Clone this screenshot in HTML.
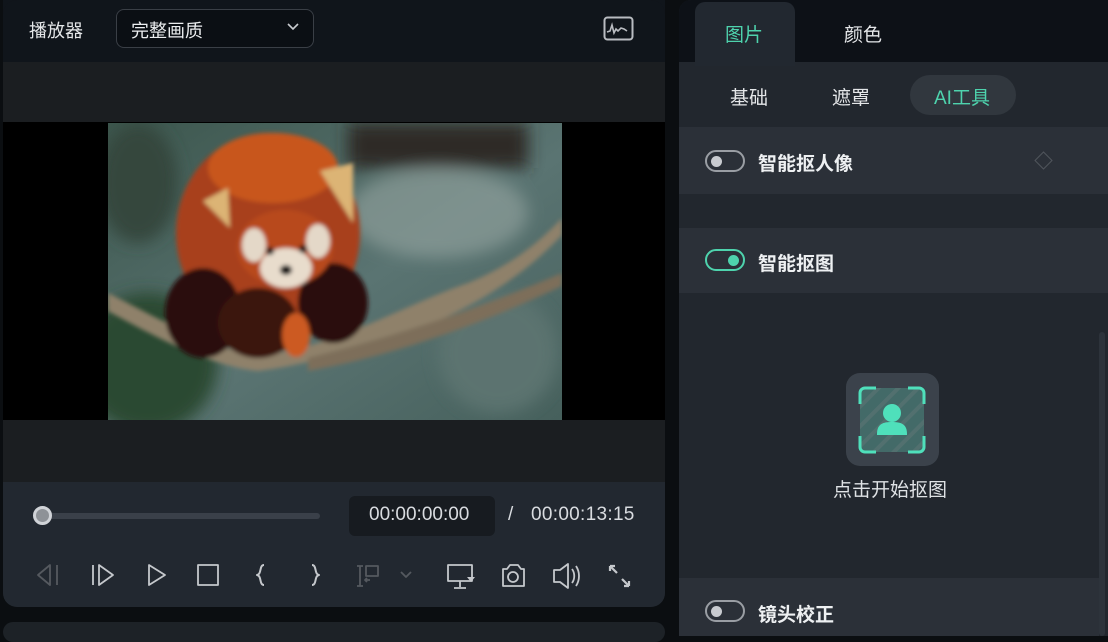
<!DOCTYPE html>
<html><head><meta charset="utf-8"><style>
*{margin:0;padding:0;box-sizing:border-box}
body{width:1108px;height:636px;background:#0b0e11;position:relative;overflow:hidden;font-family:"Liberation Sans","Noto Sans CJK SC",sans-serif;color:#e6e8ea}
.a{position:absolute}
.t{font-size:18px;white-space:nowrap}
.b{font-weight:bold;font-size:19px;white-space:nowrap;color:#eef0f2}
.tog{position:absolute;width:40px;height:22px;border:2px solid #9a9ea4;border-radius:11px}
.tog i{position:absolute;left:4px;top:4px;width:11px;height:11px;border-radius:50%;background:#c8cbd0}
</style></head><body>
<!-- left panel -->
<div class="a" style="left:3px;top:0;width:662px;height:607px;border-radius:0 0 14px 14px;overflow:hidden;background:#1b1e21">
  <div class="a" style="left:0;top:0;width:662px;height:62px;background:#10151b"></div>
  <div class="a" style="left:0;top:122px;width:662px;height:298px;background:#000"></div>
  <div class="a" style="left:0;top:482px;width:662px;height:125px;background:#222830"></div>
</div>
<div class="a" style="left:3px;top:0;width:662px;height:20px;border-radius:14px 14px 0 0;background:#10151b"></div>
<div class="a t" style="left:29px;top:17px;color:#e4e6e8">播放器</div>
<div class="a" style="left:116px;top:9px;width:198px;height:39px;border:1.5px solid #3a3f46;border-radius:8px;background:#0b0f14"></div>
<div class="a t" style="left:131px;top:17px;color:#eceef0">完整画质</div>
<svg class="a" style="left:286px;top:22px" width="14" height="10"><path d="M2 2l5 5 5-5" stroke="#c9ccd0" stroke-width="1.6" fill="none"/></svg>
<svg class="a" style="left:603px;top:16px" width="32" height="26"><rect x="1.5" y="1.5" width="28" height="22" rx="3" stroke="#b9bcc1" stroke-width="2" fill="none"/><path d="M4 16l3-1 2-6 2 8 2-4 2 2 3-3 3 1 3 2" stroke="#b9bcc1" stroke-width="1.6" fill="none"/></svg>
<!-- image -->
<svg class="a" style="left:108px;top:123px" width="454" height="297" viewBox="0 0 454 297">
<defs><filter id="bl"><feGaussianBlur stdDeviation="8"/></filter><filter id="bl2"><feGaussianBlur stdDeviation="2"/></filter>
<linearGradient id="bg" x1="0" y1="0" x2="1" y2="1"><stop offset="0" stop-color="#3c564d"/><stop offset=".55" stop-color="#5a7472"/><stop offset="1" stop-color="#46605c"/></linearGradient></defs>
<rect width="454" height="297" fill="url(#bg)"/>
<g filter="url(#bl)">
<rect x="240" y="0" width="180" height="45" fill="#2e2c26"/>
<ellipse cx="330" cy="90" rx="90" ry="45" fill="#9aaaa6" opacity=".55"/>
<ellipse cx="40" cy="240" rx="70" ry="70" fill="#2c4a30"/>
<ellipse cx="30" cy="60" rx="40" ry="60" fill="#34463c"/>
<ellipse cx="390" cy="230" rx="60" ry="60" fill="#5b7370"/>
</g>
<g filter="url(#bl2)">
<path d="M0 170 C60 200 100 225 150 232 C220 228 300 180 360 160 C410 140 440 110 454 95 L454 112 C420 148 380 175 330 198 C270 222 200 242 150 248 C100 243 40 210 0 188Z" fill="#8f816a"/>
<path d="M200 235 C280 215 360 190 454 150 L454 163 C380 198 290 232 200 248Z" fill="#7d6e5a"/>
<ellipse cx="160" cy="110" rx="92" ry="100" fill="#a8401a"/>
<ellipse cx="165" cy="45" rx="65" ry="35" fill="#c8561f"/>
<ellipse cx="95" cy="190" rx="38" ry="45" fill="#2a0f10"/>
<ellipse cx="225" cy="180" rx="35" ry="40" fill="#2a0f10"/>
<ellipse cx="150" cy="200" rx="40" ry="35" fill="#3a1410"/>
<path d="M95 78 L120 65 L122 105 Z" fill="#dcb474"/>
<path d="M212 48 L245 40 L245 100 Z" fill="#dcb474"/>
<ellipse cx="177" cy="125" rx="48" ry="38" fill="#b84a1c"/>
<ellipse cx="178" cy="145" rx="26" ry="20" fill="#e8dccc"/>
<ellipse cx="146" cy="122" rx="12" ry="17" fill="#e4d8c8"/>
<ellipse cx="210" cy="118" rx="12" ry="17" fill="#e4d8c8"/>
<circle cx="162" cy="128" r="4" fill="#111"/><circle cx="195" cy="126" r="4" fill="#111"/>
<ellipse cx="178" cy="147" rx="6" ry="5" fill="#111"/>
<ellipse cx="188" cy="212" rx="14" ry="22" fill="#cc5a20"/>
</g>
</svg>
<!-- controls -->
<div class="a" style="left:37px;top:513px;width:283px;height:6px;border-radius:3px;background:#3a4049"></div>
<div class="a" style="left:33px;top:506px;width:19px;height:19px;border-radius:50%;background:#8e9297;border:3px solid #d0d3d7"></div>
<div class="a" style="left:349px;top:496px;width:146px;height:40px;border-radius:6px;background:#171b20"></div>
<div class="a t" style="left:369px;top:504px;color:#d9dce0;font-size:19px">00:00:00:00</div>
<div class="a t" style="left:508px;top:504px;color:#d9dce0;font-size:19px">/</div>
<div class="a t" style="left:531px;top:504px;color:#d9dce0;font-size:19px;letter-spacing:.3px">00:00:13:15</div>
<svg class="a" style="left:0;top:555px" width="665" height="45" fill="none" stroke-width="1.8" stroke-linejoin="round">
<path d="M50 10 L38 20 L50 30Z M57 10V30" stroke="#55595f"/>
<path d="M93 10V30 M99 10 L113 20 L99 30Z" stroke="#c5c8cc"/>
<path d="M149 10 L165 20 L149 30Z" stroke="#c5c8cc"/>
<rect x="198" y="10" width="20" height="20" stroke="#c5c8cc"/>
<path d="M264 10 C259 10 262 19 257 20 C262 21 259 30 264 30" stroke="#c5c8cc" stroke-width="2"/>
<path d="M312 10 C317 10 314 19 319 20 C314 21 317 30 312 30" stroke="#c5c8cc" stroke-width="2"/>
<path d="M360 11V31 M357 11h6 M357 31h6 M366 11h12v10h-12z M370 25h-5 M367 23l-2 2 2 2" stroke="#55595f"/>
<path d="M401 17l5 5 5-5" stroke="#55595f"/>
<rect x="448" y="10" width="24" height="16" stroke="#c5c8cc"/><path d="M460 26v6 M454 33h12" stroke="#c5c8cc"/><path d="M467 22h8l-4 5z" fill="#c5c8cc" stroke="none"/>
<path d="M503 14h4l3-4h8l3 4h3v17h-21z" stroke="#c5c8cc"/><circle cx="513" cy="22" r="5" stroke="#c5c8cc"/>
<path d="M554 15h6l8-6v24l-8-6h-6z M572 14c3 4 3 10 0 14 M576 11c4 6 4 14 0 20" stroke="#c5c8cc"/>
<path d="M610 11l7 7 M610 11v5 M610 11h5 M629 31l-7-7 M629 31v-5 M629 31h-5" stroke="#c5c8cc" stroke-width="2.2"/>
</svg>
<div class="a" style="left:3px;top:622px;width:662px;height:20px;border-radius:12px;background:#1d2227"></div>
<!-- right panel -->
<div class="a" style="left:679px;top:0;width:429px;height:636px;background:#22272e;border-radius:12px 0 0 0"></div>
<div class="a" style="left:679px;top:0;width:429px;height:62px;background:#0d1117;border-radius:12px 0 0 0"></div>
<div class="a" style="left:695px;top:2px;width:100px;height:64px;background:#222830;border-radius:10px 10px 0 0"></div>
<div class="a t" style="left:725px;top:20px;color:#4ed3ad;font-size:19px">图片</div>
<div class="a t" style="left:844px;top:20px;color:#e4e6e8;font-size:19px">颜色</div>
<div class="a t" style="left:730px;top:83px;color:#e4e6e8;font-size:19px">基础</div>
<div class="a t" style="left:832px;top:83px;color:#e4e6e8;font-size:19px">遮罩</div>
<div class="a" style="left:910px;top:75px;width:106px;height:40px;border-radius:20px;background:#31373e"></div>
<div class="a t" style="left:934px;top:83px;color:#4ed3ad;font-size:19px">AI工具</div>
<div class="a" style="left:679px;top:127px;width:429px;height:67px;background:#2b3038"></div>
<div class="tog" style="left:705px;top:150px"><i></i></div>
<div class="a b" style="left:758px;top:149px">智能抠人像</div>
<div class="a" style="left:1037px;top:154px;width:13px;height:13px;border:1.5px solid #50555c;transform:rotate(45deg)"></div>
<div class="a" style="left:679px;top:228px;width:429px;height:65px;background:#2b3038"></div>
<div class="tog" style="left:705px;top:249px;border-color:#4ed3ad"><i style="left:21px;background:#4ed3ad"></i></div>
<div class="a b" style="left:758px;top:249px">智能抠图</div>
<div class="a" style="left:1099px;top:332px;width:6px;height:304px;border-radius:3px;background:#2d333b"></div>
<div class="a" style="left:846px;top:373px;width:93px;height:93px;border-radius:14px;background:#3b424b"></div>
<svg class="a" style="left:858px;top:386px" width="68" height="68" viewBox="0 0 68 68">
<defs><pattern id="st" width="14" height="14" patternUnits="userSpaceOnUse" patternTransform="rotate(45)"><rect width="14" height="14" fill="#436a68"/><rect width="4" height="14" fill="#52706f"/></pattern></defs>
<rect x="2" y="2" width="64" height="64" rx="4" fill="url(#st)"/>
<path d="M2 18V7a5 5 0 0 1 5-5h11 M50 2h11a5 5 0 0 1 5 5v11 M66 50v11a5 5 0 0 1-5 5H50 M18 66H7a5 5 0 0 1-5-5V50" stroke="#4fe0bb" stroke-width="3" fill="none"/>
<circle cx="34" cy="27" r="9" fill="#4fe0bb"/><path d="M19 48c0-10 6-12 15-12s15 2 15 12v1H19z" fill="#4fe0bb"/>
</svg>
<div class="a t" style="left:833px;top:475px;color:#dfe2e5;font-size:19px">点击开始抠图</div>
<div class="a" style="left:679px;top:578px;width:420px;height:58px;background:#2b3038"></div>
<div class="tog" style="left:705px;top:600px"><i></i></div>
<div class="a b" style="left:758px;top:600px">镜头校正</div>
</body></html>
